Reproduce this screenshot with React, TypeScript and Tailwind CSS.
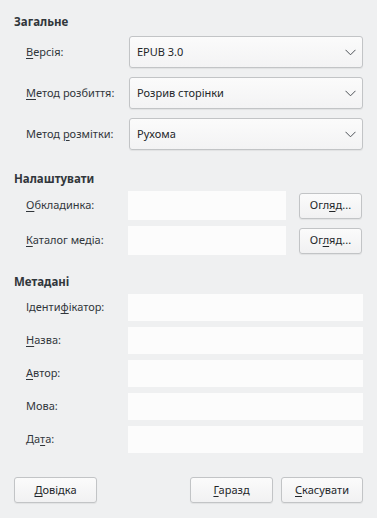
import React from 'react';

const font = "font-['Noto_Sans','DejaVu_Sans',sans-serif]";

const Mn: React.FC<{ children: React.ReactNode }> = ({ children }) => (
    <span className="underline underline-offset-[2px] decoration-[1px]">{children}</span>
);

const Chevron = () => (
    <svg width="11" height="7" viewBox="0 0 11 7" className="text-[#4d5257]">
        <path d="M0.5 0.8 L5.5 5.8 L10.5 0.8" fill="none" stroke="currentColor" strokeWidth="1" />
    </svg>
);

const Combo: React.FC<{ label: React.ReactNode; value: string }> = ({ label, value }) => (
    <div className="flex items-center h-[32px]">
        <div className="w-[115px] pl-[12px] text-[#31363b]">{label}</div>
        <div className="w-[234px] h-[32px] flex items-center justify-between pl-[7px] pr-[6px] rounded-[3px] border border-[#c2c4c6] bg-gradient-to-b from-[#fbfbfb] to-[#f3f3f4] shadow-[0_1px_1px_rgba(0,0,0,0.06)]">
            <span className="text-[#232629]">{value}</span>
            <Chevron />
        </div>
    </div>
);

const Button: React.FC<{ children: React.ReactNode; className?: string }> = ({ children, className }) => (
    <div className={`h-[26px] flex items-center justify-center rounded-[3px] border border-[#c2c4c6] bg-gradient-to-b from-[#fbfbfb] to-[#f1f1f2] shadow-[0_1px_1px_rgba(0,0,0,0.06)] text-[#232629] ${className ?? ''}`}>
        {children}
    </div>
);

const Header: React.FC<{ children: React.ReactNode }> = ({ children }) => (
    <div className="h-[16px] leading-[16px] font-bold text-[11.5px] text-[#31363b]">{children}</div>
);

const MetaRow: React.FC<{ label: React.ReactNode }> = ({ label }) => (
    <div className="flex items-center h-[27px]">
        <div className="w-[114px] pl-[12px] text-[#31363b]">{label}</div>
        <div className="w-[235px] h-[27px] bg-[#fcfcfc]" />
    </div>
);

export default function App() {
    return (
        <div className={`w-[377px] h-[518px] bg-[#eff0f1] px-[14px] pt-[14px] text-[11px] ${font}`}>
            <Header>Загальне</Header>
            <div className="mt-[6px] flex flex-col gap-[9px]">
                <Combo label={<><Mn>В</Mn>ерсія:</>} value="EPUB 3.0" />
                <Combo label={<><Mn>М</Mn>етод розбиття:</>} value="Розрив сторінки" />
                <Combo label={<>Метод <Mn>р</Mn>озмітки:</>} value="Рухома" />
            </div>

            <div className="mt-[21px]">
                <Header>Налаштувати</Header>
            </div>
            <div className="mt-[4px] flex flex-col gap-[6px]">
                <div className="flex items-center h-[29px]">
                    <div className="w-[114px] pl-[12px] text-[#31363b]"><Mn>О</Mn>бкладинка:</div>
                    <div className="w-[158px] h-[29px] bg-[#fcfcfc]" />
                    <Button className="ml-[13px] w-[63px]"><span>Огл<Mn>я</Mn>д...</span></Button>
                </div>
                <div className="flex items-center h-[29px]">
                    <div className="w-[114px] pl-[12px] text-[#31363b]"><Mn>К</Mn>аталог медіа:</div>
                    <div className="w-[158px] h-[29px] bg-[#fcfcfc]" />
                    <Button className="ml-[13px] w-[63px]"><span>Ог<Mn>л</Mn>яд...</span></Button>
                </div>
            </div>

            <div className="mt-[19px]">
                <Header>Метадані</Header>
            </div>
            <div className="mt-[4px] flex flex-col gap-[6px]">
                <MetaRow label={<>Іденти<Mn>ф</Mn>ікатор:</>} />
                <MetaRow label={<><Mn>Н</Mn>азва:</>} />
                <MetaRow label={<><Mn>А</Mn>втор:</>} />
                <MetaRow label={<>Мова:</>} />
                <MetaRow label={<>Да<Mn>т</Mn>а:</>} />
            </div>

            <div className="mt-[24px] flex items-center">
                <Button className="w-[83px]"><span><Mn>Д</Mn>овідка</span></Button>
                <div className="flex-1" />
                <Button className="w-[83px]"><span><Mn>Г</Mn>аразд</span></Button>
                <Button className="ml-[8px] w-[82px]"><span><Mn>С</Mn>касувати</span></Button>
            </div>
        </div>
    );
}
